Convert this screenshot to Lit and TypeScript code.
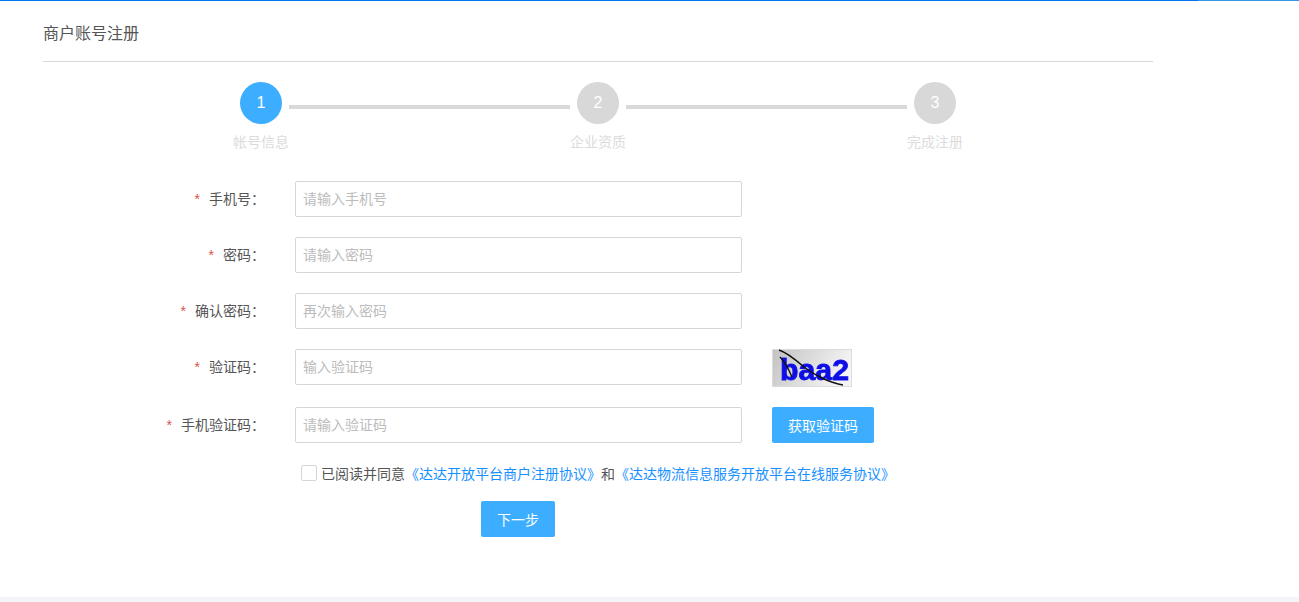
import { LitElement, html, css } from "lit";
import { customElement } from "lit/decorators.js";

const STEPS = ["帐号信息", "企业资质", "完成注册"];
const FIELDS = [
  { label: "手机号", ph: "请输入手机号", extra: "" },
  { label: "密码", ph: "请输入密码", extra: "" },
  { label: "确认密码", ph: "再次输入密码", extra: "" },
  { label: "验证码", ph: "输入验证码", extra: "captcha" },
  { label: "手机验证码", ph: "请输入验证码", extra: "sms" },
];

@customElement("app-root")
export class AppRoot extends LitElement {
  static styles = css`
    :host {
      display: block;
      height: 602px;
      background: #f3f5fa;
      font-family: "Microsoft YaHei", "Liberation Sans", "Noto Sans CJK SC", sans-serif;
      font-size: 14px;
      color: #555;
      overflow: hidden;
    }
    .bar { display: flex; height: 1px; }
    .bar-main { width: 1198px; background: #0077ee; }
    .bar-rest { flex: 1; background: #3c96e6; }
    .page {
      background: #fff;
      height: 596px;
      box-sizing: border-box;
      padding: 0 146px 0 43px;
    }
    .title {
      height: 61px;
      box-sizing: border-box;
      padding-top: 21px;
      line-height: 24px;
      font-size: 16px;
      color: #555;
      border-bottom: 1px solid #d9d9d9;
    }
    .steps { display: flex; margin: 20px 0 0 190px; height: 99px; }
    .step { width: 56px; display: flex; flex-direction: column; align-items: center; }
    .circle {
      width: 42px; height: 42px; border-radius: 50%;
      background: #d8d8d8; color: #fff;
      display: flex; align-items: center; justify-content: center;
      font-size: 16px;
    }
    .step.on .circle { background: #3daeff; }
    .step-label { margin-top: 8px; line-height: 20px; color: #dcdcdc; white-space: nowrap; }
    .conn { width: 281px; height: 4px; background: #d9d9d9; margin-top: 23px; }
    .form { display: flex; flex-direction: column; gap: 20px; }
    .row { display: flex; align-items: flex-start; }
    .label {
      width: 222px; height: 36px; line-height: 36px;
      text-align: right; color: #555; white-space: nowrap;
    }
    .star { color: #d9534f; margin-right: 9px; }
    .input {
      width: 447px; height: 36px; margin-left: 30px;
      box-sizing: border-box;
      border: 1px solid #d6d6d6; border-radius: 2px;
      padding: 0 7px;
      font: inherit; color: #555; background: #fff; outline: none;
    }
    .input::placeholder { color: #bcbcbc; opacity: 1; }
    .captcha {
      display: block; margin-left: 30px; width: 80px; height: 38px;
    }
    .btn {
      border: none; border-radius: 2px; background: #3daeff; color: #fff;
      font: inherit; height: 36px; padding: 0; cursor: pointer;
    }
    .sms { width: 102px; margin-left: 30px; }
    .agree {
      display: flex; align-items: center; height: 20px;
      margin: 20px 0 0 258px; white-space: nowrap;
    }
    .check {
      width: 16px; height: 16px; box-sizing: border-box;
      border: 1px solid #d6d6d6; border-radius: 2px; background: #fff;
      margin-right: 4px;
    }
    .agree a { color: #1890ff; text-decoration: none; }
    .next { display: block; width: 74px; margin: 18px 0 0 438px; }
  `;

  private captcha() {
    return html`<svg class="captcha" viewBox="0 0 80 38" aria-label="验证码图片">
      <defs>
        <linearGradient id="cg" x1="0" y1="0" x2="1" y2="0.3">
          <stop offset="0" stop-color="#c2c2c2" />
          <stop offset="1" stop-color="#f4f4f4" />
        </linearGradient>
        <filter id="soft" x="-5%" y="-5%" width="110%" height="110%">
          <feGaussianBlur stdDeviation="0.45" />
        </filter>
      </defs>
      <rect x="0.5" y="0.5" width="79" height="37" fill="url(#cg)" stroke="#dcdcdc" />
      <text x="8" y="31" font-family="Liberation Sans, sans-serif" font-weight="700" font-size="30" fill="#1010e6" stroke="#1010e6" stroke-width="0.8" textLength="69" lengthAdjust="spacingAndGlyphs" filter="url(#soft)">baa2</text>
      <path d="M7 1 C16 4 24 11 32 18 C42 26 58 34 71 36" fill="none" stroke="#111" stroke-width="1.4" />
      <path d="M8 8 C13 13 17 21 20 28" fill="none" stroke="#111" stroke-width="1.4" />
    </svg>`;
  }

  render() {
    return html`
      <div class="bar"><div class="bar-main"></div><div class="bar-rest"></div></div>
      <div class="page">
        <div class="title">商户账号注册</div>
        <div class="steps">
          ${STEPS.map(
            (s, i) => html`
              ${i > 0 ? html`<div class="conn"></div>` : ""}
              <div class="step ${i === 0 ? "on" : ""}">
                <div class="circle">${i + 1}</div>
                <div class="step-label">${s}</div>
              </div>
            `
          )}
        </div>
        <div class="form">
          ${FIELDS.map(
            (f) => html`
              <div class="row">
                <div class="label"><span class="star">*</span>${f.label}：</div>
                <input class="input" placeholder=${f.ph} />
                ${f.extra === "captcha" ? this.captcha() : ""}
                ${f.extra === "sms" ? html`<button class="btn sms">获取验证码</button>` : ""}
              </div>
            `
          )}
        </div>
        <div class="agree">
          <span class="check"></span>
          <span>已阅读并同意<a href="#">《达达开放平台商户注册协议》</a>和<a href="#">《达达物流信息服务开放平台在线服务协议》</a></span>
        </div>
        <button class="btn next">下一步</button>
      </div>
    `;
  }
}
